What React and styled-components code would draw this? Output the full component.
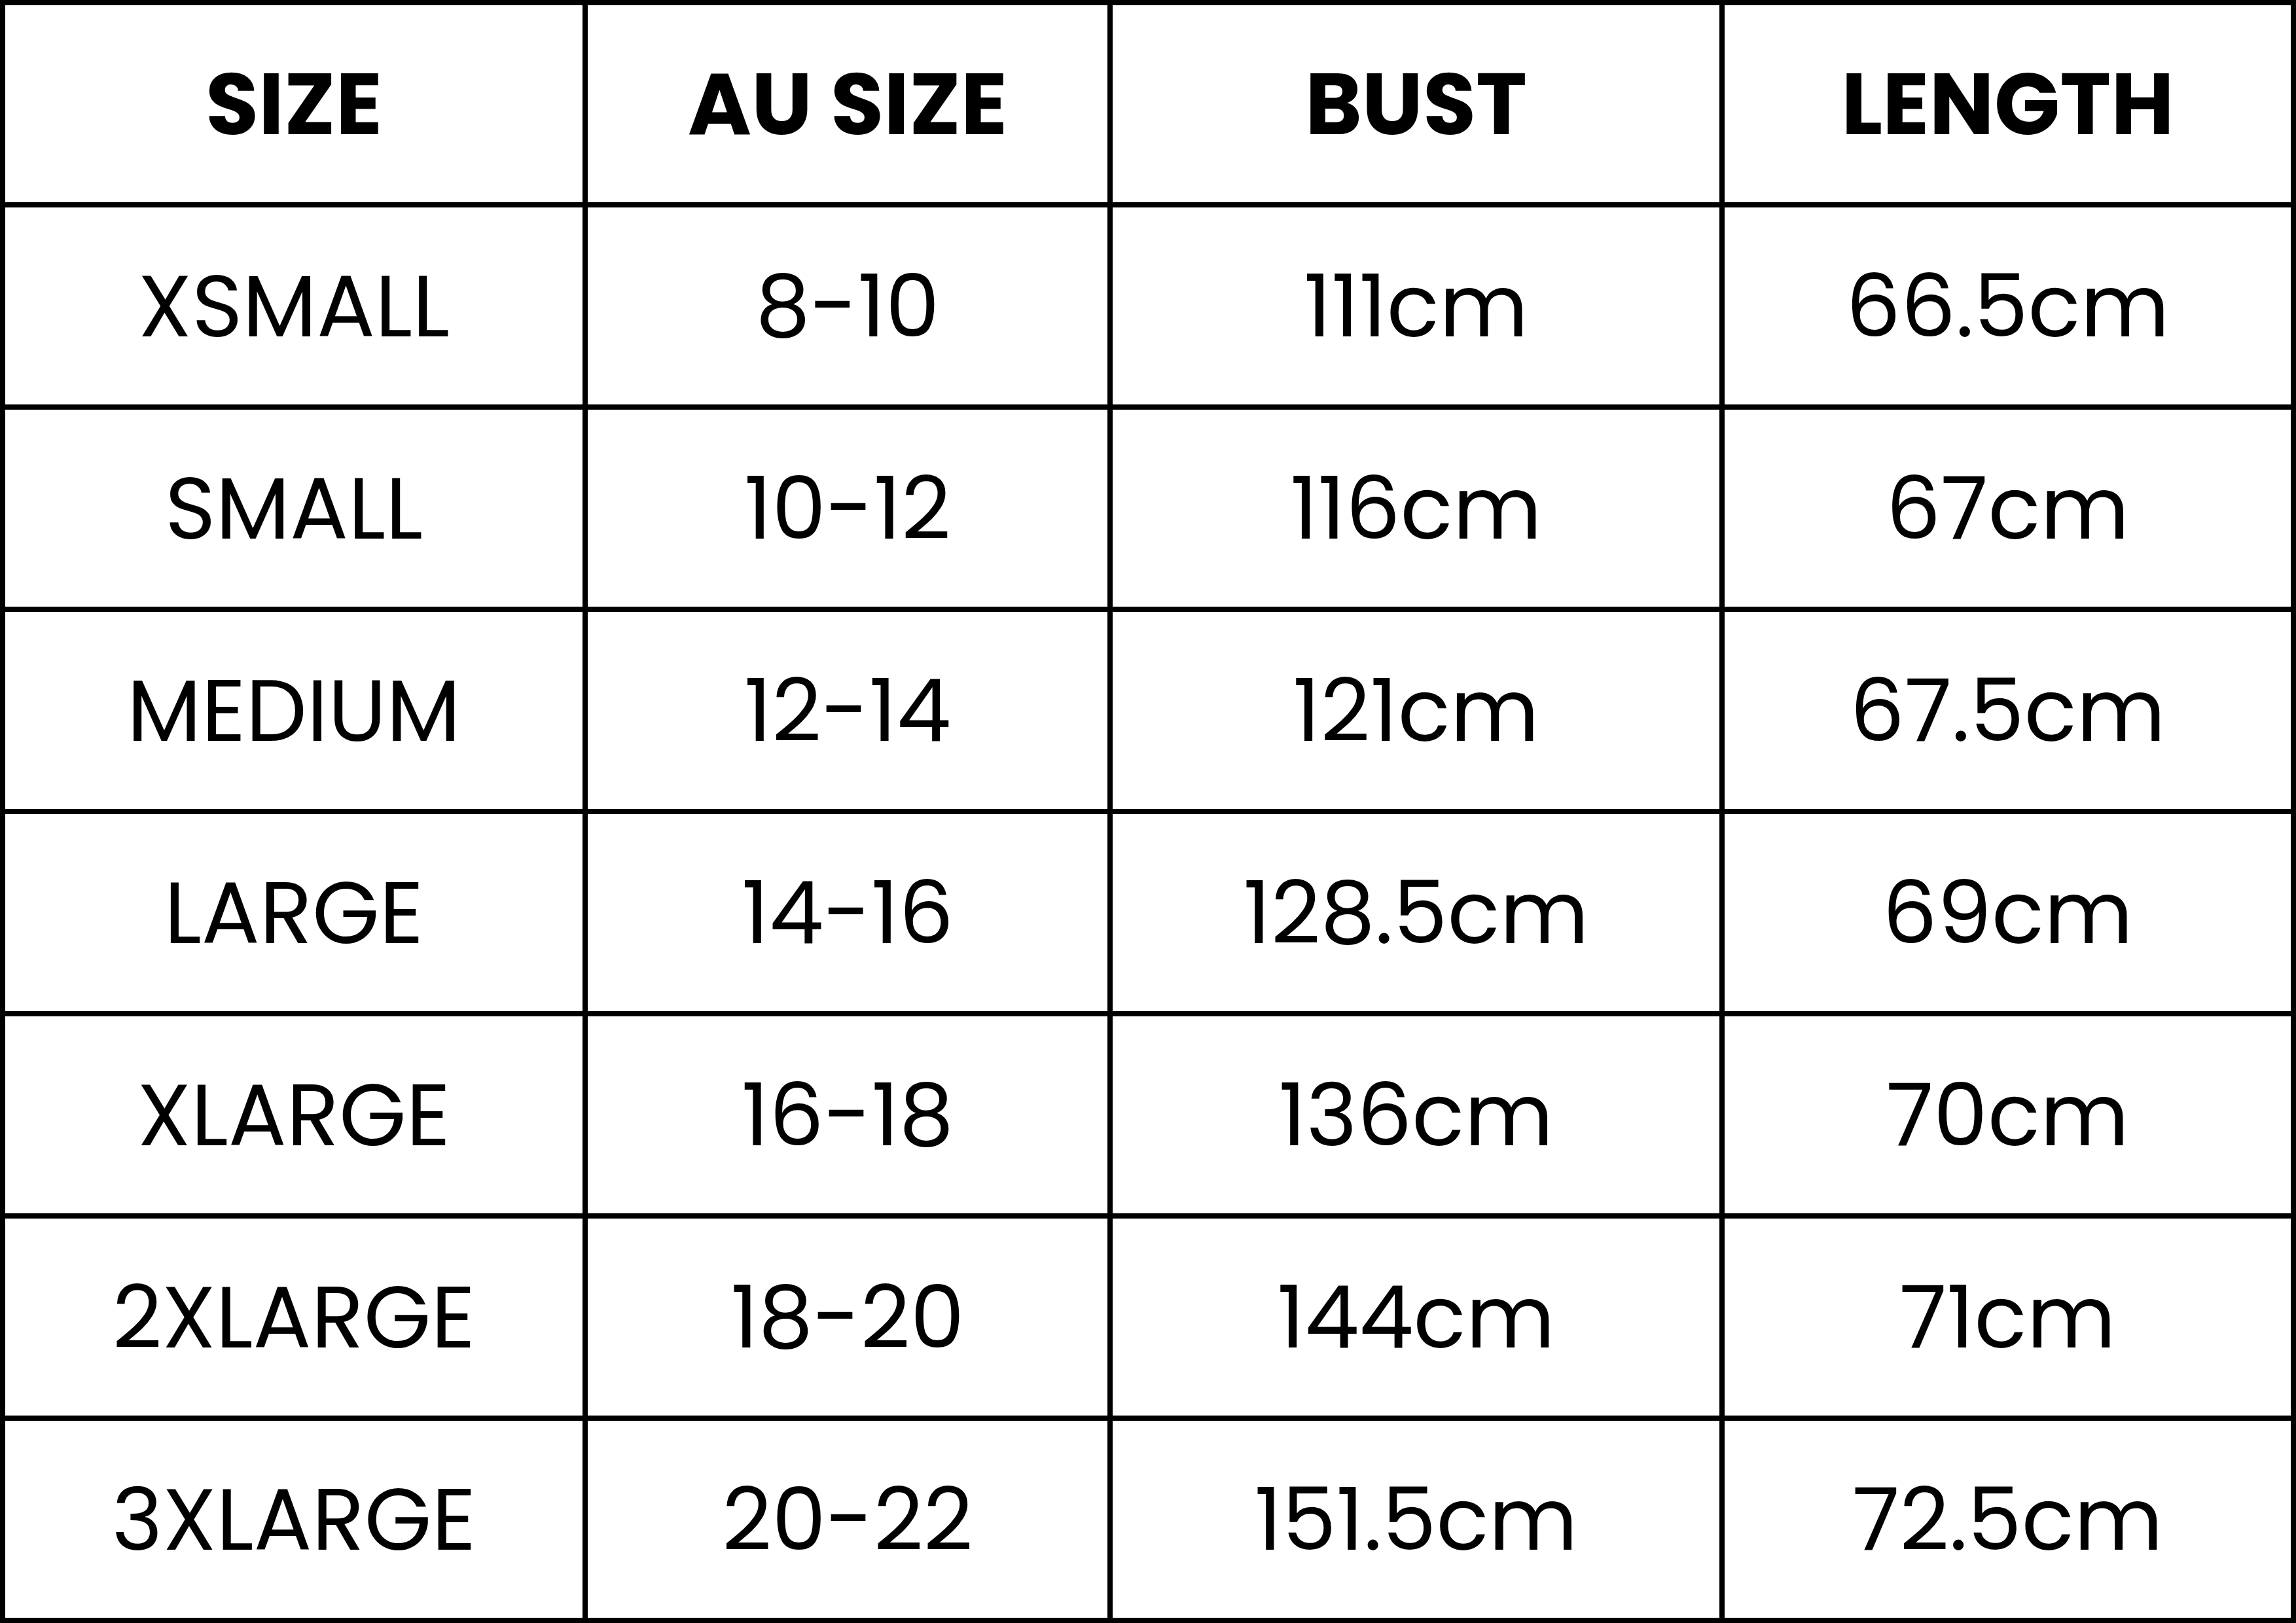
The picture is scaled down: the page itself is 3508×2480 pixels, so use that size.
import styled, { createGlobalStyle } from "styled-components";

const GlobalStyle = createGlobalStyle`
html, body {
    margin: 0;
    padding: 0;
    background: #fff;
}
`;

const Chart = styled.div`
display: grid;
grid-template-columns: 882px 794px 927px 865px;
grid-auto-rows: 301px;
gap: 8px;
padding: 8px;
width: 3508px;
height: 2480px;
box-sizing: border-box;
background-color: #000;
`;

const Cell = styled.div`
background-color: #fff;
color: #000;
display: flex;
align-items: center;
justify-content: center;
font-family: "Poppins", "Inter", "Noto Sans", sans-serif;
font-size: 132px;
line-height: 1;
white-space: nowrap;
${props => props.head ? `
font-weight: 700;
` : `
font-weight: 400;
`}
`;

const headers = ["SIZE", "AU SIZE", "BUST", "LENGTH"];

const rows = [
    ["XSMALL", "8-10", "111cm", "66.5cm"],
    ["SMALL", "10-12", "116cm", "67cm"],
    ["MEDIUM", "12-14", "121cm", "67.5cm"],
    ["LARGE", "14-16", "128.5cm", "69cm"],
    ["XLARGE", "16-18", "136cm", "70cm"],
    ["2XLARGE", "18-20", "144cm", "71cm"],
    ["3XLARGE", "20-22", "151.5cm", "72.5cm"],
];

export default function App() {
    return (
        <>
            <GlobalStyle />
            <Chart>
                {headers.map(h => (
                    <Cell head key={h}>{h}</Cell>
                ))}
                {rows.map(row => row.map((value, i) => (
                    <Cell key={row[0] + i}>{value}</Cell>
                )))}
            </Chart>
        </>
    );
}
